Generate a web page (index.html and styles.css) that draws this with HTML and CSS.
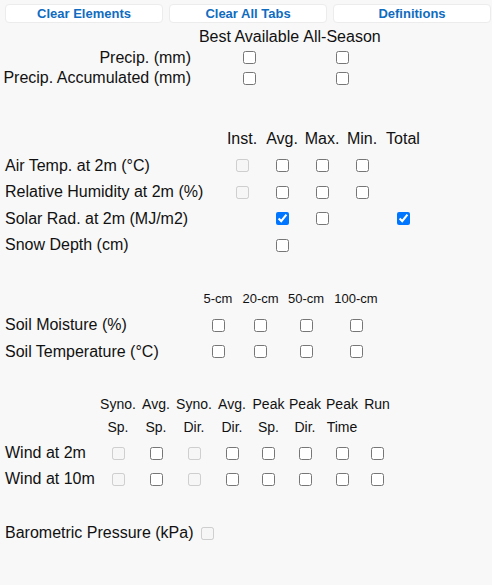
FILE: index.html
```html
<!DOCTYPE html>
<html>
<head>
<meta charset="utf-8">
<link rel="stylesheet" href="styles.css">
</head>
<body>
<div class="toolbar">
  <button class="btn">Clear Elements</button>
  <button class="btn">Clear All Tabs</button>
  <button class="btn">Definitions</button>
</div>

<div class="grid sec1">
  <span></span><span class="hd">Best Available</span><span class="hd">All-Season</span>
  <span class="lbl-r">Precip. (mm)</span><input type="checkbox"><input type="checkbox">
  <span class="lbl-r">Precip. Accumulated (mm)</span><input type="checkbox"><input type="checkbox">
</div>

<div class="grid sec2">
  <span></span><span class="hd">Inst.</span><span class="hd">Avg.</span><span class="hd">Max.</span><span class="hd">Min.</span><span class="hd">Total</span>
  <span class="lbl">Air Temp. at 2m (°C)</span><input type="checkbox" disabled><input type="checkbox"><input type="checkbox"><input type="checkbox"><span></span>
  <span class="lbl">Relative Humidity at 2m (%)</span><input type="checkbox" disabled><input type="checkbox"><input type="checkbox"><input type="checkbox"><span></span>
  <span class="lbl">Solar Rad. at 2m (MJ/m2)</span><span></span><input type="checkbox" checked><input type="checkbox"><span></span><input type="checkbox" checked>
  <span class="lbl">Snow Depth (cm)</span><span></span><input type="checkbox"><span></span><span></span><span></span>
</div>

<div class="grid sec3">
  <span></span><span class="hd sm">5-cm</span><span class="hd sm">20-cm</span><span class="hd sm">50-cm</span><span class="hd sm">100-cm</span>
  <span class="lbl">Soil Moisture (%)</span><input type="checkbox"><input type="checkbox"><input type="checkbox"><input type="checkbox">
  <span class="lbl">Soil Temperature (°C)</span><input type="checkbox"><input type="checkbox"><input type="checkbox"><input type="checkbox">
</div>

<div class="grid sec4">
  <span></span>
  <span class="hd2">Syno.<br>Sp.</span>
  <span class="hd2">Avg.<br>Sp.</span>
  <span class="hd2">Syno.<br>Dir.</span>
  <span class="hd2">Avg.<br>Dir.</span>
  <span class="hd2">Peak<br>Sp.</span>
  <span class="hd2">Peak<br>Dir.</span>
  <span class="hd2">Peak<br>Time</span>
  <span class="hd2">Run<br>&nbsp;</span>
  <span class="lbl">Wind at 2m</span><input type="checkbox" disabled><input type="checkbox"><input type="checkbox" disabled><input type="checkbox"><input type="checkbox"><input type="checkbox"><input type="checkbox"><input type="checkbox">
  <span class="lbl">Wind at 10m</span><input type="checkbox" disabled><input type="checkbox"><input type="checkbox" disabled><input type="checkbox"><input type="checkbox"><input type="checkbox"><input type="checkbox"><input type="checkbox">
</div>

<div class="sec5">
  <span class="lbl">Barometric Pressure (kPa)</span><input type="checkbox" disabled>
</div>
</body>
</html>
```

FILE: styles.css
```css
html, body {
  margin: 0;
  padding: 0;
  background: #f8f8f8;
}
body {
  font-family: "Liberation Sans", Arial, sans-serif;
  font-size: 16px;
  color: #111;
  width: 492px;
  height: 585px;
  overflow: hidden;
}
.toolbar {
  display: grid;
  grid-template-columns: 158px 158px 158px;
  column-gap: 6px;
  padding: 4px 0 0 5px;
}
.btn {
  height: 19px;
  margin: 0;
  padding: 0;
  background: #fff;
  border: 1px solid #ececec;
  border-radius: 4px;
  font-family: "Liberation Sans", Arial, sans-serif;
  font-weight: bold;
  font-size: 13px;
  color: #0f6cc0;
  line-height: 17px;
}
.grid {
  display: grid;
  align-items: center;
  justify-items: center;
}
.grid input, .sec5 input {
  margin: 0;
  width: 13px;
  height: 13px;
}
.lbl {
  justify-self: start;
  white-space: nowrap;
}
.lbl-r {
  justify-self: end;
  white-space: nowrap;
}
.hd {
  white-space: nowrap;
}
.sm {
  font-size: 13px;
}
.hd2 {
  font-size: 14px;
  line-height: 23px;
  text-align: center;
  white-space: nowrap;
}
.sec1 {
  margin: 4px 0 0 3px;
  grid-template-columns: 188px 116px 70px;
  grid-template-rows: 20px 21px 20px;
}
.sec2 {
  margin: 38px 0 0 5px;
  grid-template-columns: 217px 40px 40px 40px 40px 42px;
  grid-auto-rows: 26.5px;
}
.sec3 {
  margin: 27px 0 0 5px;
  grid-template-columns: 191px 44px 41px 50px 50px;
  grid-template-rows: 26px 27px 26px;
}
.sec4 {
  margin: 28.5px 0 0 5px;
  grid-template-columns: 94px 38px 38px 38px 38px 35px 38px 36px 34px;
  grid-template-rows: 47px 26px 26px;
}
.sec4 .hd2 {
  align-self: start;
}
.sec5 {
  margin: 28px 0 0 5px;
  display: flex;
  align-items: center;
  gap: 7px;
  height: 26px;
}
```
